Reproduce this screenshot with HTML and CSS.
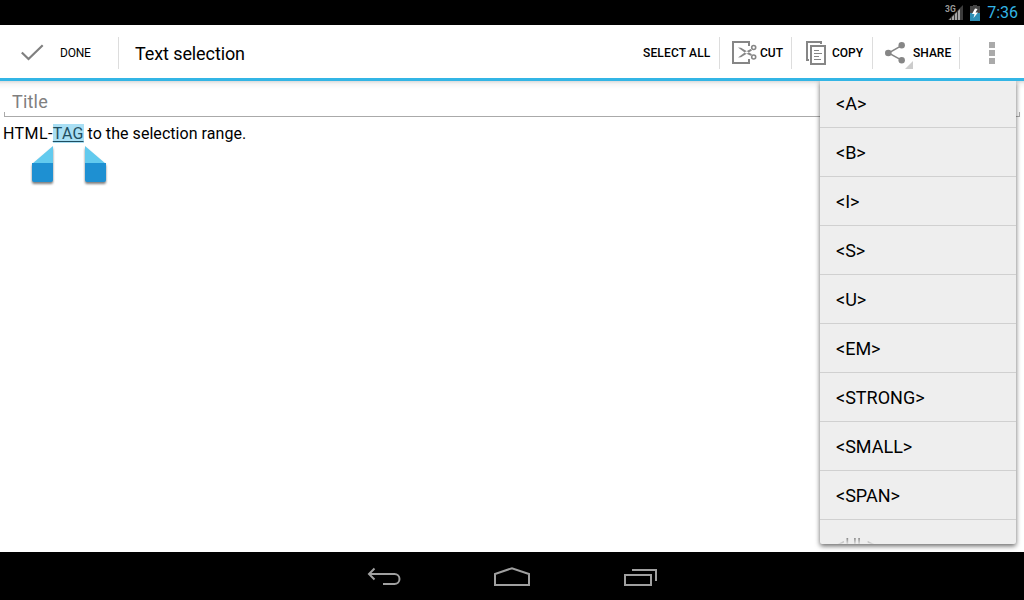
FILE: index.html
```
<!DOCTYPE html>
<html lang="en">

<head>
    <meta charset="UTF-8">
    <meta name="viewport" content="width=device-width, initial-scale=1.0">
    <title>Text selection</title>
    <link rel="stylesheet" href="styles.css">
</head>

<body>

    <div class="status-bar">
        <svg class="signal" width="19" height="18" viewBox="0 0 19 18">
            <path fill="#3c3c3c" d="M18 1v15H3z"/>
            <path fill="#a8a8a8" d="M4 16l2-2v2zM7 13l2-2v5H7zM10 10l2-2v8h-2zM13 7l2-2v11h-2z"/>
            <text class="signal-type" x="0" y="8">3G</text>
        </svg>
        <svg class="battery" width="10" height="16" viewBox="0 0 10 16">
            <path fill="#444" d="M3 0h4v1h3v7H0V1h3z"/>
            <path fill="#2d8fb5" d="M0 8h10v8H0z"/>
            <path fill="#fff" d="M5 3.500L2 9h2.500L3.500 13 8 7.500H5.500L7.500 4z"/>
        </svg>
        <span class="clock">7:36</span>
    </div>

    <div class="action-bar">
        <button class="done-btn">
            <svg width="24" height="18" viewBox="0 0 24 18">
                <path fill="none" stroke="#808080" stroke-width="2.200" d="M1.800 8.500l6.700 6.500L22.700 1.300"/>
            </svg>
            <span>DONE</span>
        </button>
        <h1>Text selection</h1>

        <button class="action select-all">SELECT ALL</button>
        <button class="action cut">
            <svg width="25" height="25" viewBox="0 0 25 25">
                <path fill="none" stroke="#868686" stroke-width="2" d="M17 6V2H1v21h16v-4"/>
                <path fill="#868686" d="M6 7.500l3 .3 11 6.400-1.300 1.600-4.700-2.400zM6 17.500l3-.3 11-6.600L18.700 9 14 11.500z"/>
                <circle cx="21.700" cy="7.500" r="2" fill="none" stroke="#868686" stroke-width="1.600"/>
                <circle cx="21.700" cy="17" r="2" fill="none" stroke="#868686" stroke-width="1.600"/>
            </svg>
            CUT
        </button>
        <button class="action copy">
            <svg width="20" height="24" viewBox="0 0 20 24">
                <path fill="none" stroke="#868686" stroke-width="2" d="M15 3V1H1v18h2M5 5h14v18H5z"/>
                <path fill="none" stroke="#868686" d="M8 9.500h5M8 12.500h8M8 15.500h5M8 18.500h7"/>
            </svg>
            COPY
        </button>
        <button class="action share">
            <svg width="20" height="22" viewBox="0 0 20 22">
                <path fill="none" stroke="#868686" stroke-width="1.500" d="M17 3.300L3.500 11 17 18.300"/>
                <g fill="#868686">
                    <circle cx="3.300" cy="11" r="3.300"/>
                    <circle cx="16.700" cy="3.300" r="3.200"/>
                    <circle cx="16.700" cy="18.300" r="3.200"/>
                </g>
            </svg>
            SHARE
            <span class="spinner-corner"></span>
        </button>
        <button class="overflow">
            <span></span><span></span><span></span>
        </button>
    </div>

    <div class="editor">
        <div class="title-field">Title</div>
        <p class="content"><span class="prefix">HTML-</span><span class="selected">TAG</span> to the selection range.</p>

        <svg class="handle handle-left" width="26" height="42" viewBox="0 0 26 42">
            <path fill="#62caee" d="M24 1v18H3z"/>
            <path fill="#1e90d2" d="M3 18h21v17q0 2-2 2H5q-2 0-2-2z"/>
        </svg>
        <svg class="handle handle-right" width="26" height="42" viewBox="0 0 26 42">
            <path fill="#62caee" d="M2 1v18h21z"/>
            <path fill="#1e90d2" d="M2 18h21v17q0 2-2 2H4q-2 0-2-2z"/>
        </svg>
    </div>

    <ul class="tag-menu">
        <li>&lt;A&gt;</li>
        <li>&lt;B&gt;</li>
        <li>&lt;I&gt;</li>
        <li>&lt;S&gt;</li>
        <li>&lt;U&gt;</li>
        <li>&lt;EM&gt;</li>
        <li>&lt;STRONG&gt;</li>
        <li>&lt;SMALL&gt;</li>
        <li>&lt;SPAN&gt;</li>
        <li>&lt;UL&gt;</li>
    </ul>

    <div class="nav-bar">
        <svg width="34" height="20" viewBox="0 0 34 20">
            <path fill="none" stroke="#a0a0a0" stroke-width="2" d="M2 7h25.500a5 5 0 0 1 0 10H16M7.500 1.500L2 7l5.500 5.500"/>
        </svg>
        <svg width="36" height="20" viewBox="0 0 36 20">
            <path fill="none" stroke="#a0a0a0" stroke-width="2" d="M1 18V7l17-5.800L35 7v11z"/>
        </svg>
        <svg width="34" height="20" viewBox="0 0 34 20">
            <path fill="none" stroke="#a0a0a0" stroke-width="2" d="M2 8h26v10H2zM9 3h24v11"/>
        </svg>
    </div>

</body>

</html>
```
FILE: styles.css
```
* {
    box-sizing: border-box;
}

body {
    margin: 0;
    width: 1024px;
    height: 600px;
    overflow: hidden;
    position: relative;
    display: flex;
    flex-direction: column;
    background-color: #fff;
    color: #000;
    font-family: Roboto, "Liberation Sans", sans-serif;
}

button {
    background: none;
    border: none;
    padding: 0;
    margin: 0;
    color: #000;
    font-family: inherit;
    cursor: pointer;
}

svg {
    display: block;
    flex: none;
}

.status-bar {
    height: 25px;
    flex: none;
    display: flex;
    justify-content: flex-end;
    align-items: center;
    padding-right: 6px;
    background-color: #000;
}

.signal {
    margin-right: 6px;
}

.signal-type {
    font-size: 8.500px;
    font-weight: bold;
    fill: #999;
}

.battery {
    margin-right: 7px;
}

.clock {
    color: #33b5e5;
    font-size: 16px;
}

.action-bar {
    height: 56px;
    flex: none;
    display: flex;
    align-items: center;
    padding-top: 2px;
    border-bottom: 3px solid #33b5e5;
}

.done-btn {
    width: 119px;
    height: 32px;
    display: flex;
    align-items: center;
    gap: 16px;
    padding-left: 20px;
    border-right: 1px solid #ddd;
    font-size: 12px;
    letter-spacing: -0.2px;
}

h1 {
    flex: 1;
    margin: 0;
    padding: 2px 0 0 16px;
    font-size: 18px;
    font-weight: normal;
    letter-spacing: -0.1px;
}

.action {
    height: 32px;
    display: flex;
    align-items: center;
    border-right: 1px solid #ddd;
    font-size: 12px;
    font-weight: 500;
    position: relative;
}

.select-all {
    width: 77px;
    letter-spacing: 0.15px;
}

.cut {
    width: 72px;
    gap: 3px;
    padding-left: 12px;
}

.copy {
    width: 81px;
    gap: 6px;
    padding-left: 14px;
}

.share {
    width: 87px;
    gap: 8px;
    padding-left: 12px;
}

.spinner-corner {
    position: absolute;
    left: 32px;
    bottom: 0;
    border-left: 8px solid transparent;
    border-bottom: 8px solid #ccc;
}

.overflow {
    width: 64px;
    display: flex;
    flex-direction: column;
    align-items: center;
    gap: 2px;
}

.overflow span {
    width: 6px;
    height: 6px;
    background-color: #aaa;
}

.editor {
    flex: 1;
    position: relative;
    background: linear-gradient(#dcdcdc, #f5f5f5 3px, #fff 8px);
}

.title-field {
    height: 36px;
    margin: 0 4px;
    padding: 10px 8px 0;
    color: #808080;
    font-size: 18px;
    letter-spacing: 0.2px;
    position: relative;
}

.title-field::after {
    content: "";
    position: absolute;
    left: 0;
    right: 0;
    bottom: 0;
    height: 4px;
    border: 1px solid #aaa;
    border-top: none;
}

.content {
    margin: 0;
    padding: 7px 3px 0;
    font-size: 16px;
    line-height: 19px;
    letter-spacing: 0.05px;
}

.prefix {
    letter-spacing: 0.4px;
}

.selected {
    color: #1f4e61;
    background-color: #a9dff4;
    text-decoration: underline;
    text-underline-offset: 2px;
    letter-spacing: 0.2px;
}

.handle {
    position: absolute;
    top: 64px;
    filter: drop-shadow(0 2px 1px rgba(0, 0, 0, 0.5));
}

.handle-left {
    left: 29px;
}

.handle-right {
    left: 83px;
}

.tag-menu {
    position: absolute;
    top: 81px;
    left: 820px;
    width: 196px;
    height: 463px;
    margin: 0;
    padding: 0;
    list-style: none;
    background-color: #eee;
    border-radius: 0 0 2px 2px;
    box-shadow: 0 2px 5px rgba(0, 0, 0, 0.6);
    clip-path: inset(0 -8px -8px -8px);
    font-size: 18px;
}

.tag-menu li {
    height: 49px;
    padding-left: 16px;
    line-height: 49px;
    border-bottom: 1px solid #d0d0d0;
}

.tag-menu li:first-child {
    height: 47px;
    line-height: 46px;
}

/* last row is cut off by the end of the popup and fades out */
.tag-menu li:last-child {
    height: 24px;
    overflow: hidden;
    border-bottom: none;
    color: transparent;
    background: linear-gradient(#888 18px, #ddd 24px);
    -webkit-background-clip: text;
    background-clip: text;
}

.nav-bar {
    height: 48px;
    flex: none;
    display: flex;
    justify-content: center;
    align-items: center;
    gap: 93px;
    padding-top: 2px;
    background-color: #000;
}
```
